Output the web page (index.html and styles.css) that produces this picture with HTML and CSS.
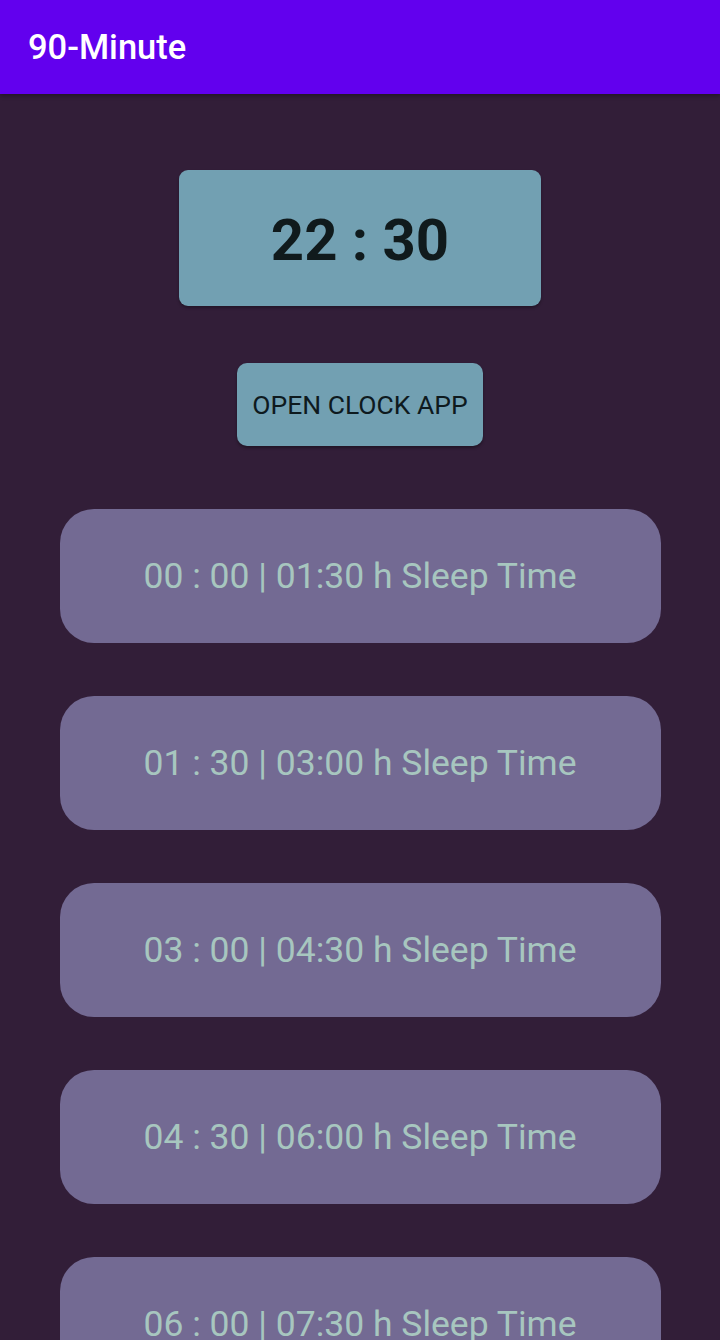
FILE: index.html
```html
<!DOCTYPE html>
<html>
<head>
<meta charset="utf-8">
<link rel="stylesheet" href="styles.css">
</head>
<body>
<header class="appbar"><h1 class="title">90-Minute</h1></header>
<main class="content">
  <div class="clock">22 : 30</div>
  <button class="open-btn">OPEN CLOCK APP</button>
  <div class="list">
    <div class="card">00 : 00 | 01:30 h Sleep Time</div>
    <div class="card">01 : 30 | 03:00 h Sleep Time</div>
    <div class="card">03 : 00 | 04:30 h Sleep Time</div>
    <div class="card">04 : 30 | 06:00 h Sleep Time</div>
    <div class="card">06 : 00 | 07:30 h Sleep Time</div>
  </div>
</main>
</body>
</html>
```
FILE: styles.css
```css
html, body {
  margin: 0;
  padding: 0;
  height: 100%;
  overflow: hidden;
}
body {
  background: #321e38;
  font-family: Roboto, "Liberation Sans", sans-serif;
}
.appbar {
  height: 94px;
  background: #6200ee;
  display: flex;
  align-items: center;
  padding-left: 28px;
  box-shadow: 0 2px 4px rgba(0,0,0,0.3);
}
.title {
  margin: 0;
  color: #fff;
  font-size: 34.5px;
  font-weight: 500;
  margin-top: 0;
}
.content {
  display: flex;
  flex-direction: column;
  align-items: center;
  padding-top: 76px;
}
.clock {
  width: 362px;
  height: 136px;
  box-sizing: border-box;
  background: #72a0b2;
  border-radius: 9px;
  display: flex;
  align-items: center;
  justify-content: center;
  font-size: 58px;
  font-weight: 700;
  color: #101a1c;
  padding-top: 4px;
  box-shadow: 0 2px 3px rgba(0,0,0,0.3);
}
.open-btn {
  margin-top: 57px;
  width: 246px;
  height: 83px;
  border: none;
  border-radius: 10px;
  background: #72a0b2;
  color: #0e1a1e;
  font-family: Roboto, "Liberation Sans", sans-serif;
  font-size: 26.5px;
  font-weight: 400;
  padding: 0;
  box-shadow: 0 2px 3px rgba(0,0,0,0.35);
}
.list {
  margin-top: 63px;
  display: flex;
  flex-direction: column;
  gap: 53px;
}
.card {
  width: 601px;
  height: 134px;
  background: #736a93;
  border-radius: 34px;
  display: flex;
  align-items: center;
  justify-content: center;
  color: #a7c6bf;
  font-size: 35.5px;
  font-weight: 400;
}
```
